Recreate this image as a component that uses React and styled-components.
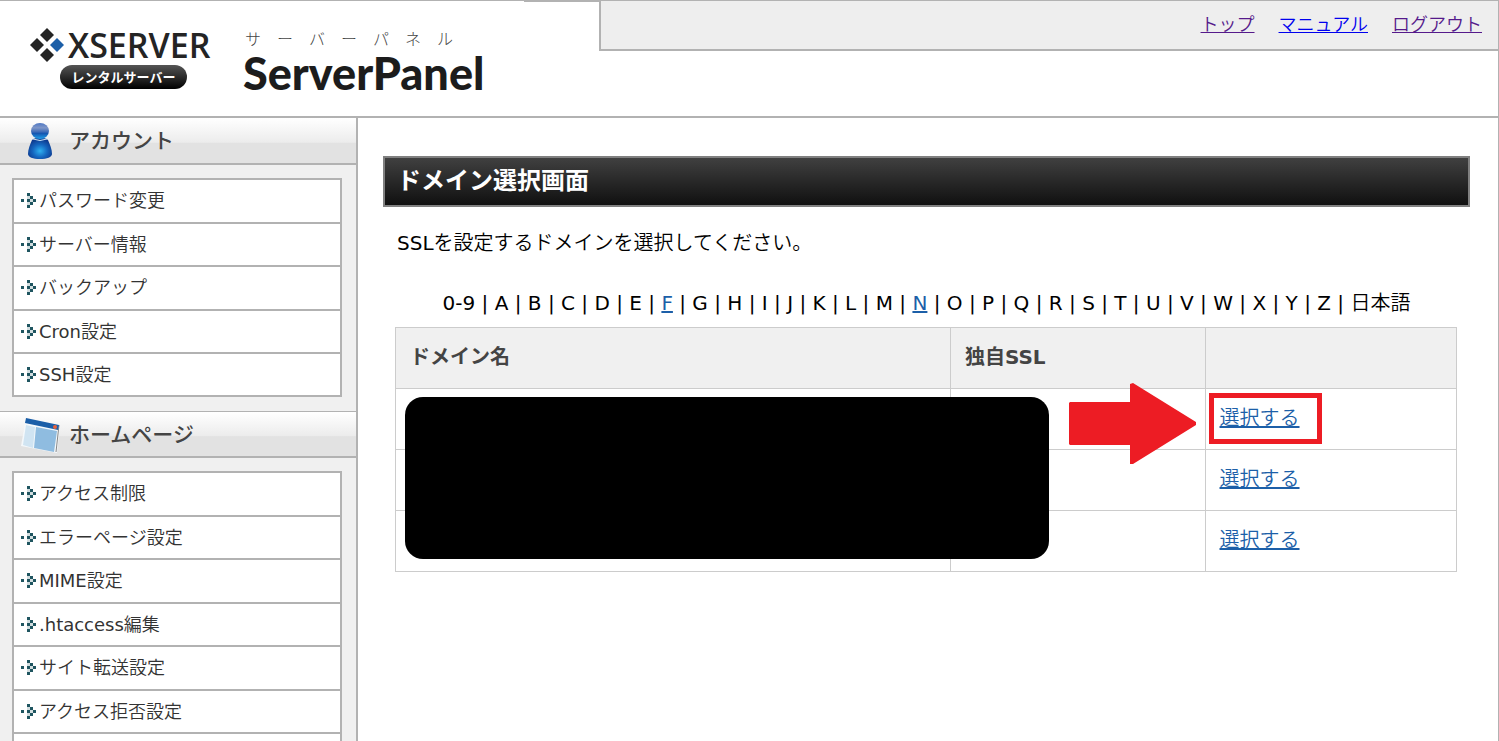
import React from 'react';
import styled, { createGlobalStyle } from 'styled-components';

const INDEX = ['0-9', ...'ABCDEFGHIJKLMNOPQRSTUVWXYZ', '日本語'];
const ACTIVE_INDEX = ['F', 'N'];

const MENUS = [
  {
    title: 'アカウント',
    icon: 'user',
    items: ['パスワード変更', 'サーバー情報', 'バックアップ', 'Cron設定', 'SSH設定'],
  },
  {
    title: 'ホームページ',
    icon: 'page',
    items: [
      'アクセス制限',
      'エラーページ設定',
      'MIME設定',
      '.htaccess編集',
      'サイト転送設定',
      'アクセス拒否設定',
    ],
  },
];

const UserIcon = () => (
  <svg width='40' height='42' viewBox='0 0 40 42' aria-hidden='true'>
    <defs>
      <radialGradient id='userBody' cx='50%' cy='62%' r='60%'>
        <stop offset='0' stopColor='#2fb0f0' />
        <stop offset='0.5' stopColor='#1567c0' />
        <stop offset='1' stopColor='#0d3488' />
      </radialGradient>
      <linearGradient id='userHead' x1='0' y1='0' x2='0' y2='1'>
        <stop offset='0' stopColor='#4f78c4' />
        <stop offset='0.3' stopColor='#7f97c8' />
        <stop offset='0.55' stopColor='#3f6cb8' />
        <stop offset='0.65' stopColor='#1656b0' />
        <stop offset='1' stopColor='#1fa0ea' />
      </linearGradient>
    </defs>
    <path
      d='M12 20 C15 17 25 17 28 20 C30 25 32 29 32 34 C32 37 27 39 20 39 C13 39 8 37 8 34 C8 29 10 25 12 20Z'
      fill='url(#userBody)'
    />
    <ellipse cx='20' cy='11' rx='9' ry='8' fill='url(#userHead)' />
    <path d='M13 19 Q20 22 27 19' stroke='#c9e2f8' strokeWidth='1' fill='none' />
  </svg>
);

const PageIcon = () => (
  <svg width='40' height='42' viewBox='0 0 40 42' aria-hidden='true'>
    <path d='M6 5 L40 12 L37 40 L1 33Z' fill='#f4f8fb' />
    <path d='M39 12 L36 39' stroke='#888' strokeWidth='1' />
    <path d='M6 12 L15 14 L13 35 L3 32Z' fill='#d0e4f2' />
    <path d='M16 14 L37 18 L34 39 L14 35Z' fill='#8fbce0' />
    <path d='M6 5 L39 12 L38 17 L5 10Z' fill='#1a5ea8' />
    <circle cx='35' cy='14' r='2' fill='#e8623a' />
  </svg>
);

const Bullet = () => (
  <svg width='15' height='15' viewBox='0 0 15 15' fill='#1f5560' aria-hidden='true'>
    <rect x='0' y='6' width='3' height='3' />
    <rect x='6' y='0' width='3' height='3' />
    <rect x='9' y='3' width='3' height='3' />
    <rect x='12' y='6' width='3' height='3' />
    <rect x='9' y='9' width='3' height='3' />
    <rect x='6' y='12' width='3' height='3' />
    <rect x='6' y='6' width='3' height='3' />
    <path d='M9 6 H12 V9 H9Z M6 3 H9 V6 H6Z M6 9 H9 V12 H6Z' opacity='0.2' />
  </svg>
);

const LogoMark = () => (
  <svg width='34' height='34' viewBox='0 0 34 34' fill='#242424' aria-hidden='true'>
    <path d='M17 0 L24 7 L17 14 L10 7Z' />
    <path d='M7 10 L14 17 L7 24 L0 17Z' />
    <path d='M27 10 L34 17 L27 24 L20 17Z' fill='#1c5fa8' />
    <path d='M17 20 L24 27 L17 34 L10 27Z' />
  </svg>
);

const App = () => {
  return (
    <Page>
      <GlobalStyle />
      <Header>
        <Brand>
          <Logo>
            <LogoName>
              <LogoMark />
              XSERVER
            </LogoName>
            <LogoBadge>レンタルサーバー</LogoBadge>
          </Logo>
          <PanelName>
            <PanelKana>サ　ー　バ　ー　パ　ネ　ル</PanelKana>
            <PanelTitle>ServerPanel</PanelTitle>
          </PanelName>
        </Brand>
        <HeaderNav>
          <NavLink href='#top' $visited>トップ</NavLink>
          <NavLink href='#manual'>マニュアル</NavLink>
          <NavLink href='#logout' $visited>ログアウト</NavLink>
        </HeaderNav>
      </Header>
      <Body>
        <Sidebar>
          {MENUS.map((menu) => (
            <section key={menu.title}>
              <MenuTitle>
                {menu.icon === 'user' ? <UserIcon /> : <PageIcon />}
                <span>{menu.title}</span>
              </MenuTitle>
              <MenuList>
                {menu.items.map((item) => (
                  <MenuItem key={item}>
                    <a href='#menu'>
                      <Bullet />
                      {item}
                    </a>
                  </MenuItem>
                ))}
              </MenuList>
            </section>
          ))}
        </Sidebar>
        <Main>
          <Title>ドメイン選択画面</Title>
          <Lead>SSLを設定するドメインを選択してください。</Lead>
          <IndexNav>
            {INDEX.map((name, i) => (
              <React.Fragment key={name}>
                {i > 0 && ' | '}
                {ACTIVE_INDEX.includes(name) ? <TextLink href='#index'>{name}</TextLink> : name}
              </React.Fragment>
            ))}
          </IndexNav>
          <TableArea>
            <DomainTable>
              <thead>
                <tr>
                  <Th $width='52.3%'>ドメイン名</Th>
                  <Th $width='24%'>独自SSL</Th>
                  <Th />
                </tr>
              </thead>
              <tbody>
                {[0, 1, 2].map((row) => (
                  <tr key={row}>
                    <Td />
                    <Td />
                    <Td>
                      <TextLink href='#select'>選択する</TextLink>
                      {row === 0 && (
                        <>
                          <Highlight />
                          <Arrow viewBox='0 0 127 81' aria-hidden='true'>
                            <path
                              d='M1 19 H61 V1 L64 0 L127 39 V42 L64 81 H61 V62 H1 L0 61 V20Z'
                              fill='#ed1c24'
                            />
                          </Arrow>
                        </>
                      )}
                    </Td>
                  </tr>
                ))}
              </tbody>
            </DomainTable>
            <Mask />
          </TableArea>
        </Main>
      </Body>
    </Page>
  );
};

const headingFont = `Verdana, 'DejaVu Sans', 'Noto Sans CJK JP', sans-serif`;

const GlobalStyle = createGlobalStyle`
  * {
    box-sizing: border-box;
  }
  body {
    margin: 0;
    overflow: hidden;
    background: #fff;
    color: #000;
    font-family: Verdana, 'DejaVu Sans', 'Noto Sans CJK JP DemiLight', 'Noto Sans CJK JP', sans-serif;
    font-size: 20px;
  }
`;
const Page = styled.div`
  display: flex;
  flex-direction: column;
  height: 100vh;
  overflow: hidden;
  border-top: 1px solid #b2b2b2;
`;
const Header = styled.header`
  display: flex;
  align-items: flex-start;
  flex-shrink: 0;
  height: 117px;
  border-bottom: 2px solid #b2b2b2;
  border-right: 1px solid #b2b2b2;
`;
const Brand = styled.div`
  display: flex;
  flex: 0 0 599px;
  gap: 32px;
  padding: 27px 0 0 30px;
  background: linear-gradient(#b2b2b2, #b2b2b2) right top / 75px 1px no-repeat;
`;
const Logo = styled.div`
  display: flex;
  flex-direction: column;
  width: 181px;
`;
const LogoName = styled.div`
  display: flex;
  align-items: center;
  gap: 4px;
  height: 34px;
  color: #242424;
  font-family: 'Open Sans', sans-serif;
  font-size: 34px;
  font-weight: 600;
`;
const LogoBadge = styled.div`
  width: 127px;
  margin: 3px 0 0 30px;
  border-radius: 12px;
  background: linear-gradient(#555, #000);
  color: #fff;
  font-family: 'Noto Sans CJK JP', sans-serif;
  font-size: 13px;
  font-weight: 700;
  line-height: 24px;
  text-align: center;
`;
const PanelName = styled.div`
  color: #1c1c1c;
`;
const PanelKana = styled.div`
  padding-left: 2px;
  color: #444;
  font-family: 'Noto Sans CJK JP', sans-serif;
  font-size: 16px;
  font-weight: 300;
  line-height: 20px;
`;
const PanelTitle = styled.div`
  font-family: Lato, sans-serif;
  font-size: 45px;
  font-weight: 900;
  line-height: 50px;
`;
const HeaderNav = styled.nav`
  display: flex;
  flex: 1;
  gap: 24px;
  justify-content: flex-end;
  height: 50px;
  padding: 11px 16px 0 0;
  border-bottom: 2px solid #b2b2b2;
  border-left: 2px solid #b2b2b2;
  background: #eee;
  font-size: 18px;
  line-height: 26px;
`;
const NavLink = styled.a`
  color: ${({ $visited }) => ($visited ? '#551a8b' : '#0000ee')};
`;
const Body = styled.div`
  display: flex;
  flex: 1;
  min-height: 0;
`;
const Sidebar = styled.aside`
  flex: 0 0 358px;
  overflow: hidden;
  border-right: 2px solid #b2b2b2;
  background: #f0f0f0;
`;
const MenuTitle = styled.h2`
  display: flex;
  align-items: center;
  gap: 9px;
  height: 47px;
  margin: 0;
  padding-left: 20px;
  border-bottom: 2px solid #b2b2b2;
  background: linear-gradient(#fff, #ececec 54%, #e2e2e2 56%, #e2e2e2);
  color: #444;
  font-family: 'Noto Sans CJK JP', sans-serif;
  font-size: 21px;
  font-weight: 500;
  & > span {
    padding-bottom: 3px;
  }
  section + section > & {
    border-top: 1px solid #b2b2b2;
  }
`;
const MenuList = styled.ul`
  margin: 13px 14px 14px 12px;
  padding: 0;
  border: 2px solid #b2b2b2;
  border-bottom: none;
  background: #fff;
  list-style: none;
  section:last-child > & {
    padding-bottom: 43px;
  }
`;
const MenuItem = styled.li`
  height: 43px;
  border-bottom: 2px solid #b2b2b2;
  font-size: 18px;
  line-height: 41px;
  & > a {
    display: flex;
    align-items: center;
    gap: 3px;
    padding-left: 7px;
    color: #333;
    text-decoration: none;
  }
  &:nth-child(odd):not(:last-child) {
    height: 44px;
  }
`;
const Main = styled.main`
  flex: 1;
  padding: 38px 28px 0 25px;
  border-right: 1px solid #b2b2b2;
`;
const Title = styled.h1`
  margin: 0;
  padding: 0 12px;
  border: 2px solid #808080;
  background: linear-gradient(#404040, #101010);
  color: #fff;
  font-family: ${headingFont};
  font-size: 24px;
  font-weight: 700;
  line-height: 47px;
`;
const Lead = styled.p`
  margin: 22px 14px;
  line-height: 28px;
`;
const IndexNav = styled.nav`
  margin: 32px 12px 10px;
  line-height: 28px;
  text-align: center;
`;
const TextLink = styled.a`
  color: #1c5fa8;
`;
const TableArea = styled.div`
  position: relative;
  margin: 0 13px 0 12px;
`;
const DomainTable = styled.table`
  width: 100%;
  border-collapse: collapse;
  table-layout: fixed;
`;
const Th = styled.th`
  width: ${({ $width }) => $width || 'auto'};
  height: 61px;
  padding: 0 14px 6px;
  border: 1px solid #ccc;
  background: #f0f0f0;
  color: #444;
  font-family: ${headingFont};
  font-weight: 700;
  text-align: left;
`;
const Td = styled.td`
  position: relative;
  height: 61px;
  padding: 0 14px 6px;
  border: 1px solid #ccc;
`;
const Highlight = styled.div`
  position: absolute;
  top: 4px;
  left: 3px;
  width: 113px;
  height: 51px;
  border: 5px solid #ed1c24;
`;
const Arrow = styled.svg`
  position: absolute;
  top: -6px;
  right: calc(100% + 10px);
  width: 127px;
  height: 81px;
`;
const Mask = styled.div`
  position: absolute;
  top: 70px;
  left: 10px;
  width: 644px;
  height: 162px;
  border-radius: 18px;
  background: #000;
`;

export default App;
